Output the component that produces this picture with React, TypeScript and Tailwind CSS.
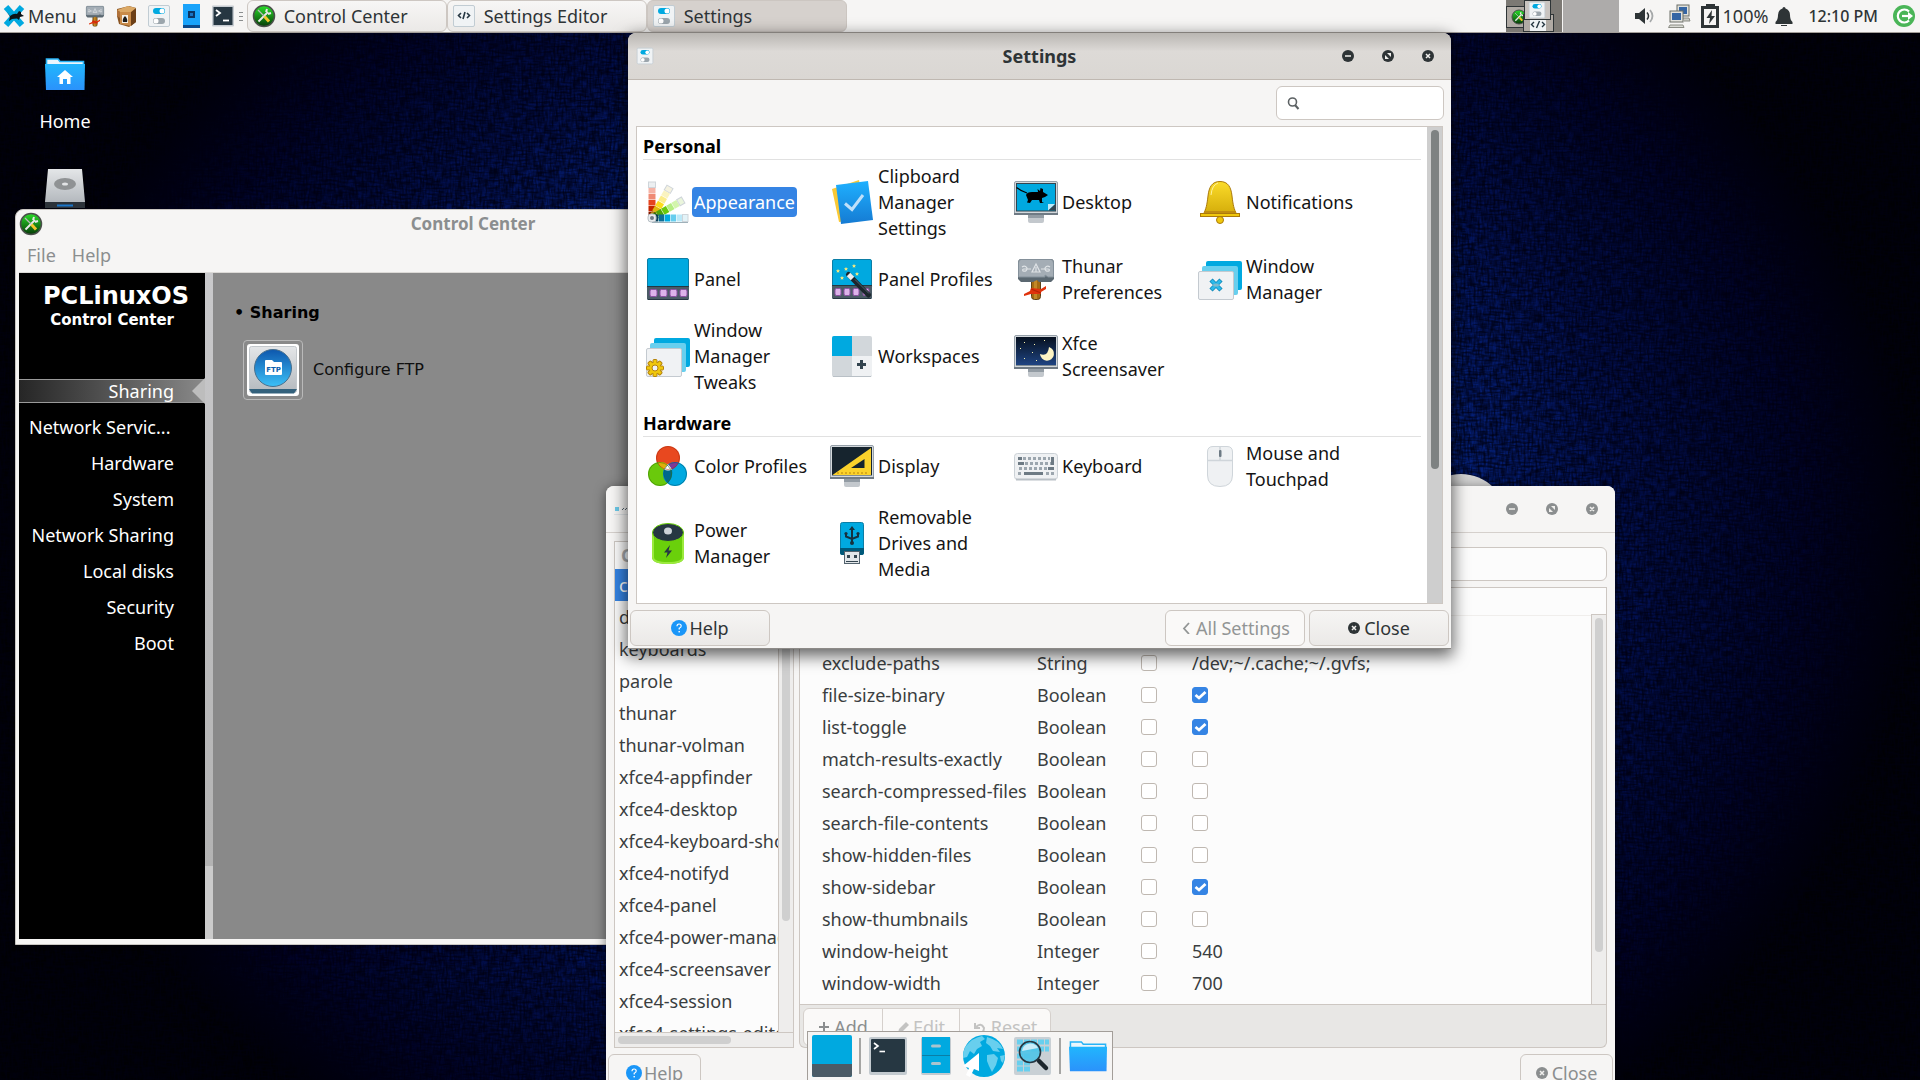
import type { ReactNode } from 'react'
import clsx from 'clsx'

function Svg({ size = 48, box = 48, children }: { size?: number; box?: number; children: ReactNode }) {
  return (
    <svg width={size} height={size} viewBox={`0 0 ${box} ${box}`} className="shrink-0" aria-hidden="true">
      {children}
    </svg>
  )
}

/* ---------- icons ---------- */

function Monitor({ children }: { children?: ReactNode }) {
  return (
    <Svg>
      <rect x="16" y="36" width="16" height="9" rx="2" fill="#c3c8cd" />
      <rect x="16" y="36" width="16" height="4" fill="#939ca4" />
      <rect x="2.500" y="3.500" width="43" height="33" rx="1.500" fill="#d3d8dc" stroke="#96a0a9" />
      <rect x="2" y="35" width="44" height="2" fill="#6f7a84" />
      <rect x="4.500" y="5.500" width="39" height="27.500" fill="#00a9e0" stroke="#33444f" />
      {children}
    </Svg>
  )
}

function MouseShape() {
  return (
    <g fill="#000">
      <path d="M4.500 9.500 Q9 13 15 15" fill="none" stroke="#000" strokeWidth="1.200" />
      <path d="M14 17 Q15 14 20 14 L26 14 L25.500 11 L28 13 L28.500 10 L31 11 L31 14 L36 17 L33 19 L30 20 L30 24 L32 25 L28 25 L27 22 L20 22 L18 25 L15 24.500 L16 22 Z" />
    </g>
  )
}

function AppearanceIcon() {
  const strips = [
    ['#eceff1', '#f5b3a6', '#ef8a74', '#e5451f', '#c52600', '#7e1800'],
    ['#f5f2e0', '#faf3c0', '#fbec8b', '#fbdc1d', '#e0b70f', '#b5830d'],
    ['#eaf5dc', '#d3f5ac', '#b5ee83', '#6ac90b', '#4fa507', '#347604'],
    ['#e3f3f8', '#bce9f8', '#67cdee', '#00a9e0', '#0e6f96', '#0a4157'],
  ]
  return (
    <Svg>
      {strips.map((colors, i) => (
        <g key={i} transform={`rotate(${i * 30} 8 40)`}>
          {colors.map((c, j) => (
            <rect key={c} x="4.500" y={4 + j * 6} width="7" height="5.500" fill={c} stroke={j === 0 ? '#cfd5da' : 'none'} />
          ))}
        </g>
      ))}
      <rect x="4" y="36" width="8" height="8" rx="3" fill="#e9ecee" stroke="#b8c0c6" />
      <circle cx="8" cy="40" r="2" fill="#6f7a84" />
      <path d="M8 44.500 H44" stroke="#9fb1ba" />
    </Svg>
  )
}

function ClipboardIcon() {
  return (
    <Svg>
      <path d="M4 11 L31 2 L38 40 L11 44 Z" fill="#fbc934" />
      <path d="M8 7 L40 3 L45 42 L13 46 Z" fill="url(#sheet)" />
      <path d="M17 25.500 L24 31.500 L35 17" fill="none" stroke="#bfe0fa" strokeWidth="3" />
    </Svg>
  )
}

function DesktopIcon() {
  return (
    <Monitor>
      <MouseShape />
      <path d="M36 32.500 L43 26 V32.500 Z" fill="#33444f" />
      <path d="M36 32.500 V26 H43 Z" fill="#bfeaf8" />
    </Monitor>
  )
}

function BellIcon() {
  return (
    <Svg>
      <circle cx="24" cy="42" r="3.500" fill="#f0c80c" stroke="#ab7a0a" />
      <path d="M24 3.500 C16 3.500 13 9 12 18 C11 27 10 31 7.500 36 H40.500 C38 31 37 27 36 18 C35 9 32 3.500 24 3.500 Z" fill="url(#gold)" stroke="#ab7a0a" />
      <path d="M15 17 Q16 7 22 5" fill="none" stroke="#fff3a0" />
      <rect x="8" y="33" width="32" height="2.500" fill="#c08d10" />
      <rect x="4.500" y="35.500" width="39" height="3" fill="#f0c80c" stroke="#ab7a0a" />
    </Svg>
  )
}

function PanelIcon() {
  return (
    <Svg>
      <rect x="3.500" y="3.500" width="41" height="41" rx="1.500" fill="#00a9e0" stroke="#0b7ea6" />
      <rect x="3" y="31" width="42" height="14" rx="1.500" fill="#4b5b66" />
      <path d="M3 31.500 H45 M4 44.500 H44" stroke="#263742" />
      {[6, 16, 26, 36].map((x) => (
        <rect key={x} x={x} y="34.500" width="7" height="7" rx="1.500" fill="#ddb3ea" stroke="#8d4fa4" />
      ))}
    </Svg>
  )
}

function PanelProfilesIcon() {
  const stars = [[10, 16], [18, 14], [26, 11], [14, 23], [29, 19]]
  return (
    <Svg>
      <rect x="4.500" y="4.500" width="39" height="39" rx="1.500" fill="#00a9e0" stroke="#0b7ea6" />
      <rect x="4" y="30" width="40" height="14" rx="1.500" fill="#4b5b66" />
      <path d="M4 30.500 H44 M5 43.500 H43" stroke="#263742" />
      {[7, 16, 25, 35].map((x) => (
        <rect key={x} x={x} y="33.500" width="6" height="7" rx="1.500" fill="#ddb3ea" stroke="#8d4fa4" />
      ))}
      {stars.map(([x, y]) => (
        <path key={x} d={`M${x} ${y - 2} l.7 1.300 h1.300 l-1 1 .3 1.400 -1.300 -.7 -1.300 .7 .3 -1.400 -1 -1 h1.300 Z`} fill="#f8ea7d" />
      ))}
      <path d="M20.500 19.500 L40.500 40" stroke="#1c262d" strokeWidth="5" strokeLinecap="round" />
      <path d="M20.500 19.500 L24.500 23.500" stroke="#eef0f2" strokeWidth="5" />
      <path d="M27 24.500 L41 38.500" stroke="#52626d" />
    </Svg>
  )
}

function HammerIcon({ size = 48 }: { size?: number }) {
  return (
    <Svg size={size}>
      <rect x="19.500" y="24" width="9" height="20.500" rx="3" fill="#a56a12" stroke="#5f4218" />
      <rect x="22" y="25" width="3" height="19" fill="#c28827" />
      <path d="M6 8 Q6 4 9 4 H39 Q42 4 42 8 V24 L39 27 H27 L25 25 L21 27 H9 L6 24 Z" fill="#5b6871" />
      <path d="M6.500 8 Q6.500 4.500 9 4.500 H39 Q41.500 4.500 41.500 8 V22 H36 L33 20 V22 H6.500 Z" fill="#a4adb5" stroke="#84909a" />
      <path d="M24 9 L28 17 H20 Z M24 12 V17" fill="none" stroke="#dfe3e6" strokeWidth="1.200" />
      <path d="M10 12 q3 -2 5 1 q0 4 -4 3 q-1 -2 1 -2 h7 M38 12 q-3 -2 -5 1 q0 4 4 3 q1 -2 -1 -2 h-7" fill="none" stroke="#dfe3e6" strokeWidth="1.200" />
      <path d="M12 39 L18 36 L19 33 L29 34 L34 31 L34 34 L29 37 L29 39 L19 39 L12 41 Z" fill="#e0320c" />
      <path d="M19 34 L29 38" stroke="#b52405" strokeWidth="1.200" />
    </Svg>
  )
}

function StackedWindows({ children }: { children?: ReactNode }) {
  return (
    <Svg>
      <rect x="10" y="6" width="36" height="29" rx="2" fill="#00a9e0" />
      <rect x="6" y="11" width="36" height="29" rx="2" fill="#68cfee" />
      <rect x="2.500" y="16.500" width="35" height="28" rx="1.500" fill="#f0f2f4" stroke="#c4cad0" />
      {children}
    </Svg>
  )
}

function WindowManagerIcon() {
  return (
    <StackedWindows>
      <path d="M15 25 L25 35 M25 25 L15 35" stroke="#0f87b5" strokeWidth="4.500" />
      <path d="M15.500 25.500 L24.500 34.500 M24.500 25.500 L15.500 34.500" stroke="#2ab9ea" strokeWidth="3" />
      <ellipse cx="20" cy="30" rx="3" ry="1.600" fill="#7fb9cd" />
    </StackedWindows>
  )
}

function TweaksIcon() {
  return (
    <StackedWindows>
      {[0, 45, 90, 135].map((a) => (
        <rect key={a} x="9" y="27.500" width="4" height="17" rx="1" fill="#f0c80c" stroke="#b5830d" transform={`rotate(${a} 11 36)`} />
      ))}
      <circle cx="11" cy="36" r="5.500" fill="#f0c80c" />
      <circle cx="11" cy="36" r="3" fill="#f0f2f4" stroke="#b5830d" />
    </StackedWindows>
  )
}

function WorkspacesIcon() {
  return (
    <Svg>
      <rect x="4" y="4" width="40" height="41" rx="2" fill="#d2d7db" />
      <path d="M4 24 V6 Q4 4 6 4 H24 V24 Z" fill="#00a9e0" />
      <path d="M24 24 H44 V43 Q44 44 42 44 H24 Z" fill="#eff1f3" />
      <path d="M33.500 28 V37 M29 32.500 H38" stroke="#33444f" strokeWidth="3" />
      <path d="M5 44.500 H43" stroke="#b9c0c6" />
    </Svg>
  )
}

function ScreensaverIcon() {
  return (
    <Monitor>
      <rect x="4" y="5" width="40" height="28" fill="url(#night)" />
      {[[12, 10], [22, 12], [32, 8], [8, 16], [20, 20], [12, 26], [24, 28]].map(([x, y]) => (
        <rect key={`${x}-${y}`} x={x} y={y} width="1" height="1" fill="#fbf4b0" />
      ))}
      <path d="M37 15 A7 7 0 1 1 28 22 Q36 25 37 15 Z" fill="#fdf4c4" />
    </Monitor>
  )
}

function ColorProfilesIcon() {
  return (
    <Svg>
      <circle cx="24" cy="16" r="12" fill="#e8481f" />
      <circle cx="16" cy="32" r="12" fill="#6ac90b" />
      <circle cx="31" cy="32" r="12" fill="#00a9e0" />
      <path d="M14 20.500 Q20 18.500 24 23 L20.500 27.500 Q15 25 14 20.500 Z" fill="#deae0a" />
      <path d="M34.500 20.500 Q28 18.500 24 23 L28 27.500 Q33 25 34.500 20.500 Z" fill="#7b3a99" />
      <path d="M20 27.500 H28 Q29.500 35 24 41 Q18 35 20 27.500 Z" fill="#00688c" />
      <path d="M24 22 L28 27.500 Q24 29.500 20 27.500 Z" fill="#fff" />
      <circle cx="24" cy="16" r="11.500" fill="none" stroke="#a8290a" strokeOpacity=".5" />
      <circle cx="16" cy="32" r="11.500" fill="none" stroke="#347604" strokeOpacity=".5" />
      <circle cx="31" cy="32" r="11.500" fill="none" stroke="#00506b" strokeOpacity=".5" />
    </Svg>
  )
}

function DisplayIcon() {
  return (
    <Monitor>
      <rect x="4" y="5" width="40" height="28" fill="#16242e" />
      <path d="M4.500 33 L43 6 V33 Z M23 26 H36.500 V17 Z" fill="#fbd22b" fillRule="evenodd" />
      <path d="M10 32 v-2 M14 32 v-2 M18 32 v-2 M22 32 v-2 M26 32 v-2 M30 32 v-2 M34 32 v-2 M38 32 v-2" stroke="#b5830d" />
    </Monitor>
  )
}

function KeyboardIcon() {
  return (
    <Svg>
      <rect x="2.500" y="11.500" width="43" height="26" rx="3" fill="#eff1f3" stroke="#cbd1d6" />
      <path d="M4 37.500 H44" stroke="#b9c0c6" strokeWidth="2" />
      <g stroke="#9ca6ae" strokeWidth="3" strokeDasharray="3 2">
        <path d="M11 16.500 H38" />
        <path d="M13 21.500 H40" />
        <path d="M7 26.500 H36" />
      </g>
      <path d="M6 31.500 H9 M34 31.500 H37 M39 31.500 H42" stroke="#9ca6ae" strokeWidth="3" />
      <path d="M6 16.500 H10 M6 21.500 H12 M36 26.500 H42 M12 31.500 H31 M39 16.500 H42 M40.500 15 V23" stroke="#6d7a84" strokeWidth="3" />
    </Svg>
  )
}

function MouseIcon() {
  return (
    <Svg>
      <path d="M11.500 10 Q11.500 4.500 17 4.500 H31 Q36.500 4.500 36.500 10 V33 Q36.500 44.500 24 44.500 Q11.500 44.500 11.500 33 Z" fill="#eff1f3" stroke="#cfd5da" />
      <path d="M12 18.500 H36 M24 5 V18" stroke="#cfd5da" strokeWidth="1.500" />
      <rect x="23" y="8" width="2.500" height="7" rx="1" fill="#6d7a84" />
    </Svg>
  )
}

function PowerIcon() {
  return (
    <Svg>
      <path d="M8 13 V38 Q8 45 24 45 Q40 45 40 38 V13 Z" fill="#6ad00b" />
      <path d="M9 13 V38 Q9 44 24 44 Q39 44 39 38 V13" fill="none" stroke="#9bea3d" strokeWidth="2" />
      <ellipse cx="24" cy="13.500" rx="15.500" ry="9" fill="#263742" stroke="#6ad00b" />
      <ellipse cx="24" cy="12" rx="4" ry="3.500" fill="#ccd3d8" />
      <path d="M26 26 L20 33.500 H23.500 L22 39 L28 31.500 H24.500 Z" fill="#263742" />
    </Svg>
  )
}

function UsbIcon() {
  return (
    <Svg>
      <rect x="12.500" y="3.500" width="23" height="32" rx="2" fill="#00a9e0" stroke="#0b7ea6" />
      <path d="M12 29 H36 V34 Q36 36 34 36 H14 Q12 36 12 34 Z" fill="#00597a" />
      <path d="M24 9 V25 M18 15 V17.500 L24 20 L30 17.500 V15" fill="none" stroke="#15323f" strokeWidth="2" />
      <path d="M24 7 L27 11 H21 Z" fill="#15323f" />
      <circle cx="24" cy="24" r="2" fill="#15323f" />
      <circle cx="18" cy="14.500" r="1.600" fill="#15323f" />
      <circle cx="30" cy="14.500" r="1.600" fill="#15323f" />
      <rect x="16.500" y="32.500" width="15" height="12" fill="#e2e6e9" stroke="#52626d" />
      <path d="M19 37.500 h3 M26 37.500 h3" stroke="#33444f" strokeWidth="3" />
      <path d="M18 42.500 H30" stroke="#33444f" />
    </Svg>
  )
}

function SettingsIcon({ size = 24 }: { size?: number }) {
  return (
    <Svg size={size} box={24}>
      <rect x="1.500" y="1.500" width="21" height="21" rx="1.500" fill="#f0f3f5" stroke="#c1ccd3" />
      <rect x="6" y="4" width="12" height="6" rx="3" fill="#00a9e0" />
      <circle cx="15" cy="7" r="2.500" fill="#fff" />
      <rect x="6" y="14" width="12" height="6" rx="3" fill="#9ba5ac" />
      <circle cx="9" cy="17" r="2.500" fill="#fff" />
    </Svg>
  )
}

function CodeIcon({ size = 24 }: { size?: number }) {
  return (
    <Svg size={size} box={24}>
      <rect x="1.500" y="1.500" width="21" height="21" rx="1.500" fill="#f0f3f5" stroke="#c1ccd3" />
      <path d="M9 9 L6.500 11.500 L9 14 M15 9 L17.500 11.500 L15 14 M13 8 L11 15" fill="none" stroke="#263742" strokeWidth="1.600" />
    </Svg>
  )
}

function ControlCenterIcon({ size = 24 }: { size?: number }) {
  return (
    <Svg size={size} box={24}>
      <circle cx="12" cy="12" r="10.500" fill="url(#green)" stroke="#4a4f4a" strokeWidth="1.500" />
      <path d="M6.500 17.500 L16 8" stroke="#e8e8e8" strokeWidth="2" />
      <path d="M14 8 l1 -3 M16 10 l3 -1" stroke="#e8e8e8" strokeWidth="2" />
      <path d="M6 6 L12 12" stroke="#b9b9b9" strokeWidth="1.200" />
      <path d="M12.500 12.500 L17 17.500" stroke="#f2c52a" strokeWidth="3" />
    </Svg>
  )
}

function XfceIcon() {
  return (
    <Svg size={24} box={24}>
      <path d="M4 3 L20 21 M20 3 L4 21" stroke="#00a9e0" strokeWidth="6" />
      <path d="M5 8 L8 12 Q12 9 15 10 L17 7 L19 8 L19 10 L22 12 L18 13 L17 16 L15 14.500 L10 15 L7 17 L8 13 Z" fill="#0b1216" />
    </Svg>
  )
}

function PackageIcon() {
  return (
    <Svg size={24} box={24}>
      <path d="M2 5 L14 2 L21 4 V18 L14 23 L4 20 L2 12 Z" fill="#8a5523" />
      <path d="M5 8 L16 8 V22 L5 20 Z" fill="#c98b49" />
      <path d="M16 8 L21 4 V18 L16 22 Z" fill="#6c3f17" />
      <path d="M2 6 L13 2 L21 4 L16 8 H5 Z" fill="#dba865" />
      <path d="M2 6 L5 8 V14 L2 12 Z" fill="#b0713a" />
      <rect x="7" y="11" width="6" height="8" fill="#f5efe6" />
      <path d="M10 12 Q13 15 12 18 H8 Q7 15 10 12 Z" fill="#1c1c1c" />
    </Svg>
  )
}

function PhoneIcon() {
  return (
    <Svg size={24} box={24}>
      <rect x="4" y="0" width="17" height="24" fill="#1aa3fa" />
      <rect x="4" y="21" width="17" height="3" fill="#0c4a8c" />
      <rect x="9" y="7" width="7" height="7" fill="#0b3563" />
      <rect x="11" y="9" width="3" height="3" fill="#1a74c4" />
    </Svg>
  )
}

function TerminalIcon() {
  return (
    <Svg size={24} box={24}>
      <rect x="1" y="1.500" width="22" height="21" rx="1" fill="#c6ccd1" />
      <rect x="2.500" y="3" width="19" height="18" fill="#263742" />
      <path d="M5 6 L9 9 L5 12" fill="none" stroke="#fff" strokeWidth="1.800" />
      <path d="M12 16.500 H18" stroke="#fff" strokeWidth="1.800" />
    </Svg>
  )
}

function FolderIcon({ home = false, size = 40 }: { home?: boolean; size?: number }) {
  return (
    <Svg size={size} box={40}>
      <path d="M1.500 2 H13 L15 4.500 H38.500 V10 H1.500 Z" fill="#eaf6fd" stroke="#27b3f6" strokeWidth="1.600" />
      <path d="M0 7 H40 L39.500 33 H1 Z" fill="url(#folder)" />
      {home && <path d="M20 13 L12 20 H14.500 V27 H18 V22 H22 V27 H25.500 V20 H28 Z" fill="#fff" />}
    </Svg>
  )
}

function DriveIcon() {
  return (
    <Svg size={40} box={40}>
      <path d="M3 1 H37 L40 34 H0 Z" fill="url(#metal)" />
      <ellipse cx="20" cy="16" rx="11" ry="6" fill="#8f9294" />
      <ellipse cx="20" cy="16" rx="3" ry="1.600" fill="#e2e4e6" />
      <rect x="0" y="34" width="40" height="6" fill="#2c333a" />
      <path d="M12 37.500 H28" stroke="#1b76c9" strokeWidth="2" />
    </Svg>
  )
}

function FtpIcon() {
  return (
    <Svg size={52} box={52}>
      <rect x="0" y="0" width="52" height="52" rx="3" fill="#fff" />
      <rect x="2.500" y="2.500" width="47" height="46" rx="2" fill="url(#metal)" stroke="#c3c8cc" />
      <path d="M2 45 H50 L47 49.500 H5 Z" fill="#33617c" />
      <circle cx="26" cy="24" r="18.500" fill="url(#orb)" stroke="#476f8d" />
      <path d="M18 17 Q18 16 19 16 H25 L27 18 H34 Q35 18 35 19 V30 Q35 31 34 31 H19 Q18 31 18 30 Z" fill="#fff" />
      <text x="26.500" y="28" textAnchor="middle" fontSize="7" fontWeight="700" fill="#0a5fae" fontFamily="DejaVu Sans">
        FTP
      </text>
    </Svg>
  )
}

function HelpIcon() {
  return (
    <Svg size={16} box={16}>
      <circle cx="8" cy="8" r="8" fill="#1a96f8" />
      <path d="M6 6.200 Q6 4 8 4 Q10.200 4 10.200 6 Q10.200 7.400 8.200 8.200 V9.500" fill="none" stroke="#fff" strokeWidth="1.200" />
      <rect x="7.500" y="11" width="1.400" height="1.400" fill="#fff" />
    </Svg>
  )
}

function DotIcon({ kind }: { kind: 'min' | 'max' | 'close' }) {
  return (
    <Svg size={12} box={12}>
      <circle cx="6" cy="6" r="6" fill="currentColor" />
      {kind === 'min' && <path d="M3 6 H9" stroke="#f0efed" strokeWidth="1.500" />}
      {kind === 'max' && <path d="M5 3 H9 V7 Z M3 5 L7 9 H3 Z" fill="#f0efed" />}
      {kind === 'close' && <path d="M4 4 L8 8 M8 4 L4 8" stroke="#f0efed" strokeWidth="1.500" />}
    </Svg>
  )
}

/* Gradients shared by the icons above */
function Gradients() {
  const stops: Record<string, [string, string]> = {
    sheet: ['#1fb0ff', '#157bd3'],
    gold: ['#fbdc2a', '#d4ac0a'],
    night: ['#06101f', '#1f4482'],
    green: ['#2ae02a', '#063a06'],
    folder: ['#21b6fd', '#2b92fb'],
    metal: ['#e4e6e8', '#b4b9be'],
    orb: ['#0d57ad', '#3cc0f7'],
  }
  return (
    <svg width="0" height="0" className="absolute" aria-hidden="true">
      <defs>
        {Object.entries(stops).map(([id, [from, to]]) => (
          <linearGradient key={id} id={id} x1="0" y1="0" x2="0" y2="1">
            <stop offset="0" stopColor={from} />
            <stop offset="1" stopColor={to} />
          </linearGradient>
        ))}
      </defs>
    </svg>
  )
}

/* ---------- desktop ---------- */

function Wallpaper() {
  return (
    <svg className="absolute inset-0 h-full w-full" aria-hidden="true">
      <defs>
        <radialGradient id="glow" cx="50%" cy="50%" r="50%" gradientTransform="translate(0 -.2) scale(1 1.4)">
          <stop offset="0" stopColor="#0a36b0" />
          <stop offset=".5" stopColor="#062480" />
          <stop offset=".7" stopColor="#031152" />
          <stop offset=".88" stopColor="#01042a" />
          <stop offset="1" stopColor="#000004" />
        </radialGradient>
        <filter id="weft" x="0" y="0" width="100%" height="100%" colorInterpolationFilters="sRGB">
          <feTurbulence type="fractalNoise" baseFrequency="0.09 0.5" numOctaves="2" seed="3" />
          <feColorMatrix values="0 0 0 0 0  0 0 0 0 0  0 0 0 0 0.06  2.600 0 0 0 -0.900" />
        </filter>
        <filter id="warp" x="0" y="0" width="100%" height="100%" colorInterpolationFilters="sRGB">
          <feTurbulence type="fractalNoise" baseFrequency="0.5 0.09" numOctaves="2" seed="8" />
          <feColorMatrix values="0 0 0 0 0  0 0 0 0 0  0 0 0 0 0.06  2.600 0 0 0 -0.900" />
        </filter>
      </defs>
      <rect width="100%" height="100%" fill="url(#glow)" />
      <rect width="100%" height="100%" filter="url(#weft)" opacity=".65" />
      <rect width="100%" height="100%" filter="url(#warp)" opacity=".65" />
      <circle cx="1461" cy="520" r="46" fill="#d3d3d3" />
    </svg>
  )
}

function TaskButton({ icon, label, active = false }: { icon: ReactNode; label: string; active?: boolean }) {
  return (
    <button
      className={clsx(
        'flex h-8 w-[200px] items-center gap-2 rounded-md border px-1',
        active ? 'border-[#ccc6c1] bg-[#d6d1cd]' : 'border-[#cdc7c2] bg-linear-to-b from-[#f7f6f5] to-[#ebe9e7]',
      )}
    >
      {icon}
      {label}
    </button>
  )
}

function Pager() {
  return (
    <div className="flex h-8 gap-px">
      <div className="relative w-14 bg-[#7c7974]">
        <div className="absolute top-1.5 left-0 flex h-[22px] w-5 items-center border border-[#2e3436] bg-[#b0aaa4] pl-1">
          <ControlCenterIcon size={16} />
        </div>
        <div className="absolute top-3.5 left-[17px] flex h-[18px] w-[31px] items-end justify-center border border-[#2e3436] bg-[#b0aaa4]">
          <Svg size={16} box={16}>
            <rect width="16" height="16" fill="#f0f3f5" />
            <path d="M4 7 L1.500 9.500 L4 12 M12 7 L14.500 9.500 L12 12 M9.500 6 L6.500 13" fill="none" stroke="#263742" strokeWidth="1.400" />
          </Svg>
        </div>
        <div className="absolute top-0 left-[18px] flex h-5 w-[27px] items-center justify-center border border-[#2e3436] bg-[#c9c4c0]">
          <SettingsIcon size={18} />
        </div>
      </div>
      <div className="w-14 bg-[#adabaa]" />
    </div>
  )
}

function TopPanel() {
  return (
    <header className="relative flex h-[33px] items-start justify-between border-b border-[#a39e99] bg-[#f6f5f4] text-[#2e3436]">
      <div className="flex h-8 items-center">
        <button className="flex items-center gap-0.5 pr-1.5 pl-0.5">
          <XfceIcon />
          Menu
        </button>
        <div className="flex items-center gap-2">
          <button aria-label="File manager"><HammerIcon size={24} /></button>
          <button aria-label="Package manager"><PackageIcon /></button>
          <button aria-label="Settings"><SettingsIcon /></button>
          <button aria-label="Phone"><PhoneIcon /></button>
          <button aria-label="Terminal"><TerminalIcon /></button>
        </div>
        <div className="mr-1 ml-1 flex h-[9px] w-1 flex-col justify-between">
          <span className="h-px bg-[#8b8e8f]" />
          <span className="h-px bg-[#8b8e8f]" />
          <span className="h-px bg-[#8b8e8f]" />
        </div>
        <TaskButton icon={<ControlCenterIcon />} label="Control Center" />
        <TaskButton icon={<CodeIcon />} label="Settings Editor" />
        <TaskButton icon={<SettingsIcon />} label="Settings" active />
      </div>
      <div className="flex h-8 items-center pr-1">
        <Pager />
        <div className="flex items-center pl-3.5">
          <Svg size={24} box={24}>
            <path d="M2 9 H6 L12 4 V20 L6 15 H2 Z" fill="#2e3436" />
            <path d="M14 8.500 Q17 12 14 15.500" fill="none" stroke="#2e3436" strokeWidth="1.500" />
            <path d="M17 6 Q22 12 17 18" fill="none" stroke="#a5a8a9" strokeWidth="1.800" />
          </Svg>
          <div className="w-2.5" />
          <Svg size={24} box={24}>
            <rect x="10" y="1" width="12" height="11" fill="#e1e1dc" stroke="#6b6e66" />
            <rect x="12" y="3" width="8" height="7" fill="#3465a4" />
            <path d="M12 14 h10 l1 3 h-6" fill="#c9cac4" stroke="#8a8c84" />
            <rect x="3" y="7" width="13" height="11" fill="#e1e1dc" stroke="#6b6e66" />
            <rect x="5" y="9" width="9" height="7" fill="#3465a4" />
            <path d="M3 21 h13 l1 2.500 H1.500 Z" fill="#d8d9d3" stroke="#8a8c84" />
          </Svg>
          <div className="w-2" />
          <Svg size={24} box={24}>
            <path d="M7 0 H16 V2 H20 V24 H2 V2 H7 Z M5 5 V21 H17 V5 Z" fill="#2e3436" fillRule="evenodd" />
            <path d="M13 6 L7.500 14 H11 L10 20 L16 12 H12.500 Z" fill="#2e3436" />
          </Svg>
          100%
        </div>
        <div className="w-1" />
        <Svg size={24} box={24}>
          <path d="M12 3 Q13.500 3 13.500 4.500 Q18 6 18 11 Q18 16 20.500 18 V20 H3.500 V18 Q6 16 6 11 Q6 6 10.500 4.500 Q10.500 3 12 3 Z" fill="#2e3436" />
          <path d="M9 21 H15 V22 H9 Z" fill="#2e3436" />
        </Svg>
        <time className="pr-3.5 pl-3 text-base font-medium">12:10 PM</time>
        <button aria-label="Log out">
          <Svg size={24} box={24}>
            <circle cx="12" cy="12" r="11" fill="#4ab557" />
            <path d="M17 7.500 A6.500 6.500 0 1 0 17 16.500" fill="none" stroke="#fff" strokeWidth="2.200" />
            <path d="M10 12 H18" stroke="#fff" strokeWidth="2.200" />
            <path d="M16 8 L21 12 L16 16 Z" fill="#fff" />
          </Svg>
        </button>
      </div>
    </header>
  )
}

function DesktopIcons() {
  return (
    <div className="relative flex w-[130px] flex-col items-center pt-6 text-white">
      <FolderIcon home />
      <span className="mt-[11px]">Home</span>
      <div className="h-[34px]" />
      <DriveIcon />
    </div>
  )
}

/* ---------- windows ---------- */

function TitleBar({ title, icon, active = false }: { title: string; icon: ReactNode; active?: boolean }) {
  return (
    <div
      className={clsx(
        'grid h-[47px] shrink-0 grid-cols-[1fr_auto_1fr] items-center rounded-t-lg border-b px-2',
        active
          ? 'border-[#bfb8b1] bg-linear-to-b from-[#b9b6b2] via-[#dddad7] via-40% to-[#dad7d3] text-[#2e3436]'
          : 'border-[#d5d0cc] bg-[#f6f5f4] text-[#8b8e8f]',
      )}
    >
      <div>{icon}</div>
      <h2 className="font-bold">{title}</h2>
      <div className="flex justify-end gap-7 pr-[9px]">
        <button aria-label="Minimize"><DotIcon kind="min" /></button>
        <button aria-label="Maximize"><DotIcon kind="max" /></button>
        <button aria-label="Close window"><DotIcon kind="close" /></button>
      </div>
    </div>
  )
}

const categories = ['Sharing', 'Network Servic...', 'Hardware', 'System', 'Network Sharing', 'Local disks', 'Security', 'Boot']

function ControlCenterWindow() {
  return (
    <section className="absolute top-[209px] left-[15px] flex h-[736px] w-[916px] flex-col rounded-t-lg border border-[#c9c6c2] bg-[#f6f5f4] px-[3px] pb-[5px] text-[#8b8e8f] shadow-lg">
      <div className="flex h-7 items-center">
        <ControlCenterIcon />
        <h2 className="flex-1 pr-6 text-center text-[17px] font-bold">Control Center</h2>
      </div>
      <nav className="flex h-[34px] items-center gap-4 pl-2">
        <button>File</button>
        <button>Help</button>
      </nav>
      <div className="flex min-h-0 flex-1 border-t border-[#dcdad7]">
        <aside className="flex w-[186px] flex-col bg-black font-['DejaVu_Sans'] text-white">
          <div className="h-[106px] pt-[9px] pr-4 pl-2 text-right">
            <p className="text-2xl leading-[29px] font-bold">PCLinuxOS</p>
            <p className="pr-[15px] text-[15px] leading-[18px] font-bold">Control Center</p>
          </div>
          <ul className="flex flex-col gap-3 font-['Noto_Sans']">
            {categories.map((name, i) => (
              <li key={name}>
                <button
                  className={clsx(
                    'relative flex h-6 w-full items-center whitespace-nowrap',
                    name.endsWith('...') ? 'justify-start pl-2.5' : 'justify-end pr-[31px]',
                    i === 0 && 'border-y border-[#9a9a9a] bg-linear-to-r from-[#262626] to-[#8a8a8a]',
                  )}
                >
                  {name}
                  {i === 0 && (
                    <svg width="14" height="26" viewBox="0 0 14 26" className="absolute -top-0.5 right-0" aria-hidden="true">
                      <path d="M14 0 L1 13 L14 26 Z" fill="#bdbdbd" />
                    </svg>
                  )}
                </button>
              </li>
            ))}
          </ul>
        </aside>
        <div className="w-2 bg-[#cbcbcb]">
          <div className="h-[89%] bg-linear-to-b from-[#c9c9cb] to-[#b3b3b3]" />
        </div>
        <main className="flex-1 bg-[#898989] pt-[27px] pl-[21px] font-['DejaVu_Sans'] text-base leading-[26px] text-[#0f0f0f]">
          <h3 className="font-bold text-black">•&nbsp;Sharing</h3>
          <div className="mt-[14px] flex gap-[320px] pl-[9px]">
            <button className="flex items-center gap-2.5">
              <span className="rounded border border-[#b9b9b9] p-[3px]">
                <FtpIcon />
              </span>
              Configure FTP
            </button>
            <span className="h-[60px] w-[60px] rounded border border-[#b9b9b9]" />
          </div>
        </main>
      </div>
    </section>
  )
}

const channels = [
  'catfish', 'displays', 'keyboards', 'parole', 'thunar', 'thunar-volman', 'xfce4-appfinder', 'xfce4-desktop',
  'xfce4-keyboard-shortcuts', 'xfce4-notifyd', 'xfce4-panel', 'xfce4-power-manager', 'xfce4-screensaver',
  'xfce4-session', 'xfce4-settings-editor',
]

const properties: { name: string; type: string; value: string | boolean }[] = [
  { name: 'close-after-select', type: 'Boolean', value: false },
  { name: 'exclude-paths', type: 'String', value: '/dev;~/.cache;~/.gvfs;' },
  { name: 'file-size-binary', type: 'Boolean', value: true },
  { name: 'list-toggle', type: 'Boolean', value: true },
  { name: 'match-results-exactly', type: 'Boolean', value: false },
  { name: 'search-compressed-files', type: 'Boolean', value: false },
  { name: 'search-file-contents', type: 'Boolean', value: false },
  { name: 'show-hidden-files', type: 'Boolean', value: false },
  { name: 'show-sidebar', type: 'Boolean', value: true },
  { name: 'show-thumbnails', type: 'Boolean', value: false },
  { name: 'window-height', type: 'Integer', value: '540' },
  { name: 'window-width', type: 'Integer', value: '700' },
]

function Checkbox({ label, checked = false }: { label: string; checked?: boolean }) {
  return (
    <label className="relative block h-4 w-4">
      <input
        type="checkbox"
        aria-label={label}
        defaultChecked={checked}
        className="peer block h-4 w-4 appearance-none rounded-[3px] border border-[#bfb8b1] bg-white checked:border-[#3584e4] checked:bg-[#3584e4]"
      />
      <svg viewBox="0 0 16 16" className="pointer-events-none absolute inset-0 hidden peer-checked:block" aria-hidden="true">
        <path d="M3.500 8 L7 11 L13.500 5" fill="none" stroke="#fff" strokeWidth="2.800" />
      </svg>
    </label>
  )
}

function SettingsEditorWindow() {
  return (
    <section className="absolute top-[486px] left-[606px] flex w-[1009px] flex-col rounded-t-lg bg-[#f6f5f4] text-[#3a3e40] shadow-[0_2px_12px_rgba(0,0,0,0.5)]">
      <TitleBar
        title="Settings Editor"
        icon={
          <Svg size={16} box={16}>
            <rect x="1" y="6" width="4" height="4" fill="#6cc9e8" />
            <path d="M8 9 l2 -2 M11 9 l2 -2" stroke="#52626d" />
            <path d="M0 13.500 H16" stroke="#dfe3e6" />
          </Svg>
        }
      />
      <div className="flex gap-[5px] px-2 pt-2">
        <div className="flex h-[507px] w-[180px] shrink-0 flex-col border border-[#cdc7c2] bg-[#fcfcfc]">
          <div className="flex min-h-0 flex-1">
            <div className="w-[164px] overflow-hidden border-r border-[#cdc7c2]">
              <p className="h-[27px] pl-1.5 font-bold text-[#a9abac]">Channel</p>
              <ul>
                {channels.map((name, i) => (
                  <li
                    key={name}
                    className={clsx('flex h-8 items-center pl-1 whitespace-nowrap', i === 0 && 'bg-[#3584e4] text-white')}
                  >
                    {name}
                  </li>
                ))}
              </ul>
            </div>
            <div className="flex-1 bg-[#eeedec] px-[3px] pt-8">
              <div className="h-[347px] w-2 rounded-full bg-[#cfcfcf]" />
            </div>
          </div>
          <div className="flex h-[15px] items-center border-t border-[#cdc7c2] bg-[#eeedec] pl-[3px]">
            <div className="h-2 w-[113px] rounded-full bg-[#cfcfcf]" />
          </div>
        </div>
        <div className="flex min-w-0 flex-1 flex-col">
          <input
            type="search"
            aria-label="Search properties"
            className="mt-1.5 h-[34px] shrink-0 rounded-md border border-[#cdc7c2] bg-[#fcfcfc] px-3"
          />
          <div className="mt-1.5 flex flex-1 border border-[#cdc7c2] bg-[#fcfcfc]">
            <div className="flex-1">
              <table className="w-full table-fixed border-collapse text-left">
                <thead>
                  <tr className="h-[27px] border-b border-[#f0eeec] text-[#a9abac]">
                    <th className="w-[237px] pl-[22px] leading-6">Property</th>
                    <th className="w-[104px] leading-6">Type</th>
                    <th className="w-[51px] leading-6">Lock</th>
                    <th className="leading-6">Value</th>
                  </tr>
                </thead>
                <tbody>
                  {properties.map((p) => (
                    <tr key={p.name} className="h-8">
                      <td className="pl-[22px] whitespace-nowrap">{p.name}</td>
                      <td>{p.type}</td>
                      <td>
                        <Checkbox label={`Lock ${p.name}`} />
                      </td>
                      <td>
                        {typeof p.value === 'string' ? p.value : <Checkbox label={p.name} checked={p.value} />}
                      </td>
                    </tr>
                  ))}
                </tbody>
              </table>
            </div>
            <div className="mt-[26px] w-[15px] border-t border-l border-[#cdc7c2] bg-[#eeedec] pt-[3px] pl-[3px]">
              <div className="h-[334px] w-2 rounded-full bg-[#cfcfcf]" />
            </div>
          </div>
          <div className="flex h-[43px] items-start rounded-b-md border border-t-0 border-[#cdc7c2] bg-[#e8e7e5] pt-[3px] pl-[3px]">
            <div className="flex h-[38px] divide-x divide-[#d5d0cc] overflow-hidden rounded-md border border-[#d5d0cc] bg-[#faf9f8] text-[#c3c3c2]">
              <button className="flex w-[79px] items-center justify-center gap-1 text-[#8b8e8f]">
                <Svg size={12} box={12}><path d="M6 1 V11 M1 6 H11" stroke="#8b8e8f" strokeWidth="2" /></Svg>
                Add
              </button>
              <button disabled className="flex w-[77px] items-center justify-center gap-0.5">
                <Svg size={14} box={14}><path d="M1 13 L2 9 L9 2 L12 5 L5 12 Z" fill="#c3c3c2" /></Svg>
                Edit
              </button>
              <button disabled className="flex w-[90px] items-center justify-center gap-1">
                <Svg size={14} box={14}><path d="M3 7 Q8 2 11 8 Q11 11 9 13 M2 3 V8 H7" fill="none" stroke="#c3c3c2" strokeWidth="2" /></Svg>
                Reset
              </button>
            </div>
          </div>
        </div>
      </div>
      <div className="flex justify-between px-0.5 pt-1.5 text-[#8b8e8f]">
        <button className="flex h-[38px] w-[93px] items-center justify-center gap-0.5 rounded-md border border-[#cdc7c2]">
          <HelpIcon />
          Help
        </button>
        <button className="flex h-[38px] w-[93px] items-center justify-center gap-1 rounded-md border border-[#cdc7c2]">
          <DotIcon kind="close" />
          Close
        </button>
      </div>
    </section>
  )
}

const sections: { title: string; items: { label: string; icon: ReactNode; selected?: boolean }[] }[] = [
  {
    title: 'Personal',
    items: [
      { label: 'Appearance', icon: <AppearanceIcon />, selected: true },
      { label: 'Clipboard Manager Settings', icon: <ClipboardIcon /> },
      { label: 'Desktop', icon: <DesktopIcon /> },
      { label: 'Notifications', icon: <BellIcon /> },
      { label: 'Panel', icon: <PanelIcon /> },
      { label: 'Panel Profiles', icon: <PanelProfilesIcon /> },
      { label: 'Thunar Preferences', icon: <HammerIcon /> },
      { label: 'Window Manager', icon: <WindowManagerIcon /> },
      { label: 'Window Manager Tweaks', icon: <TweaksIcon /> },
      { label: 'Workspaces', icon: <WorkspacesIcon /> },
      { label: 'Xfce Screensaver', icon: <ScreensaverIcon /> },
    ],
  },
  {
    title: 'Hardware',
    items: [
      { label: 'Color Profiles', icon: <ColorProfilesIcon /> },
      { label: 'Display', icon: <DisplayIcon /> },
      { label: 'Keyboard', icon: <KeyboardIcon /> },
      { label: 'Mouse and Touchpad', icon: <MouseIcon /> },
      { label: 'Power Manager', icon: <PowerIcon /> },
      { label: 'Removable Drives and Media', icon: <UsbIcon /> },
    ],
  },
]

function SettingsWindow() {
  return (
    <section className="absolute top-[33px] left-[628px] flex w-[823px] flex-col rounded-t-lg border-b border-[#8d8a87] bg-[#f6f5f4] text-[#2e3436] shadow-[0_5px_16px_2px_rgba(0,0,0,0.6)]">
      <TitleBar title="Settings" icon={<SettingsIcon size={18} />} active />
      <div className="flex justify-end py-1.5 pr-[7px]">
        <label className="flex h-[34px] w-[168px] items-center gap-2 rounded-md border border-[#cdc7c2] bg-white px-2.5">
          <Svg size={14} box={14}>
            <circle cx="5.500" cy="6" r="4" fill="none" stroke="#5c6163" strokeWidth="1.600" />
            <path d="M8 9 L11.500 13" stroke="#5c6163" strokeWidth="2" />
          </Svg>
          <input type="search" aria-label="Search settings" className="w-full min-w-0 outline-none" />
        </label>
      </div>
      <div className="mx-2 flex h-[478px] border border-[#cdc7c2] bg-white text-[#141414]">
        <div className="flex-1 overflow-hidden px-1.5 pt-1.5">
          {sections.map((s) => (
            <div key={s.title} className="pb-[13px]">
              <h3 className="border-b border-[#e1e1e1] leading-[26px] font-bold text-black">{s.title}</h3>
              <div className="grid grid-cols-[repeat(4,184px)] gap-y-2 pt-px pl-px">
                {s.items.map((item) => (
                  <button key={item.label} className="flex items-center text-left">
                    {item.icon}
                    <span
                      className={clsx(
                        'max-w-[124px] rounded px-0.5 py-0.5 leading-[26px]',
                        item.selected && 'bg-[#3584e4] text-white',
                      )}
                    >
                      {item.label}
                    </span>
                  </button>
                ))}
              </div>
            </div>
          ))}
        </div>
        <div className="w-[15px] bg-[#cecece] px-1 pt-[3px]">
          <div className="h-[339px] w-2 rounded-full bg-[#7e8282]" />
        </div>
      </div>
      <div className="flex items-center gap-1 px-0.5 pt-1.5 pb-0.5">
        <button className="mr-auto flex h-9 w-[140px] items-center justify-center gap-0.5 rounded-md border border-[#cdc7c2] bg-linear-to-b from-[#f6f5f4] to-[#ebe9e7]">
          <HelpIcon />
          Help
        </button>
        <button disabled className="flex h-9 w-[140px] items-center justify-center gap-1 rounded-md border border-[#cdc7c2] bg-[#faf9f8] text-[#929595]">
          <Svg size={12} box={12}>
            <path d="M9 1 L4 6.500 L9 12" fill="none" stroke="#929595" strokeWidth="1.800" />
          </Svg>
          All Settings
        </button>
        <button className="flex h-9 w-[140px] items-center justify-center gap-1 rounded-md border border-[#cdc7c2] bg-linear-to-b from-[#f6f5f4] to-[#ebe9e7]">
          <DotIcon kind="close" />
          Close
        </button>
      </div>
    </section>
  )
}

function Dock() {
  return (
    <nav className="absolute bottom-0 left-1/2 flex h-[49px] -translate-x-1/2 items-center gap-1 border border-b-0 border-[#a39e99] bg-[#f6f5f4] px-0.5 pb-px">
      <button aria-label="Show desktop">
        <Svg size={44} box={44}>
          <rect x="2" y="1" width="40" height="42" rx="2" fill="#00a9e0" />
          <path d="M2 30 H42 V41 Q42 43 40 43 H4 Q2 43 2 41 Z" fill="#4b5b66" />
        </Svg>
      </button>
      <span className="flex h-9 w-1 justify-center"><span className="w-0.5 bg-[#a5a5a3]" /></span>
      <button aria-label="Terminal">
        <Svg size={44} box={44}>
          <rect x="3" y="3" width="38" height="38" rx="2" fill="#c3cacf" />
          <rect x="5" y="5" width="34" height="33" rx="1" fill="#263742" />
          <path d="M8 9 L12 12 L8 15" fill="none" stroke="#fff" strokeWidth="1.600" />
          <path d="M13.500 17.500 H19" stroke="#fff" strokeWidth="1.600" />
        </Svg>
      </button>
      <button aria-label="File cabinet">
        <Svg size={44} box={44}>
          <rect x="7" y="3" width="30" height="38" rx="2" fill="#c3cacf" />
          <rect x="8" y="3" width="28" height="18" fill="#00a9e0" />
          <rect x="8" y="21" width="28" height="18" fill="#00a9e0" />
          <path d="M8 21.500 H36" stroke="#0b7ea6" />
          <path d="M18.500 12 H25.500 M18.500 29.500 H25.500" stroke="#a9c4ce" strokeWidth="3" strokeLinecap="round" />
        </Svg>
      </button>
      <button aria-label="Web browser">
        <Svg size={44} box={44}>
          <circle cx="22" cy="22" r="21" fill="#00a9e0" />
          <path d="M4 12 Q10 4 20 2 L23 5 L18 8 L20 12 L15 15 L12 20 L8 17 L5 23 L1 24 Q1 16 4 12 Z" fill="#68cfee" />
          <path d="M25 3 Q37 6 41 15 L35 14 L38 18 L31 17 L28 12 L24 9 Z" fill="#68cfee" />
          <path d="M25 21 L32 20 L36 24 L34 31 L30 38 L27 32 L25 27 Z M38 22 L43 21 L41 29 L39 27 Z" fill="#68cfee" />
          <path d="M17 19 L17 37 L12 35 L8 43 L4 41 L7 34 L1 32 Z" fill="#fff" />
        </Svg>
      </button>
      <button aria-label="Application finder">
        <Svg size={44} box={44}>
          <rect x="4" y="3" width="37" height="38" rx="2" fill="#c9d0d5" />
          {[5, 12, 19, 26, 32].map((y) => (
            <path key={y} d={`M7 ${y + 3} H${y > 18 ? 20 : 39}`} stroke="#68cfee" strokeWidth="5" strokeDasharray="6 1" />
          ))}
          <path d="M29 27 L36 34" stroke="#1c262d" strokeWidth="4.500" strokeLinecap="round" />
          <circle cx="20" cy="18" r="10.500" fill="#4fc3e8" fillOpacity=".9" stroke="#263742" strokeWidth="1.600" />
          <path d="M12 17 Q13 10 20 9.500 Q26 9.500 28 14 Z" fill="#c9ecf8" />
        </Svg>
      </button>
      <span className="flex h-9 w-1 justify-center"><span className="w-0.5 bg-[#a5a5a3]" /></span>
      <button aria-label="Files" className="flex w-11 justify-center pt-1.5">
        <FolderIcon size={38} />
      </button>
    </nav>
  )
}

export default function App() {
  return (
    <div className="relative h-screen overflow-hidden bg-black font-['Noto_Sans','Open_Sans',sans-serif] text-lg leading-[26px]">
      <Gradients />
      <Wallpaper />
      <TopPanel />
      <DesktopIcons />
      <ControlCenterWindow />
      <SettingsEditorWindow />
      <SettingsWindow />
      <Dock />
    </div>
  )
}
